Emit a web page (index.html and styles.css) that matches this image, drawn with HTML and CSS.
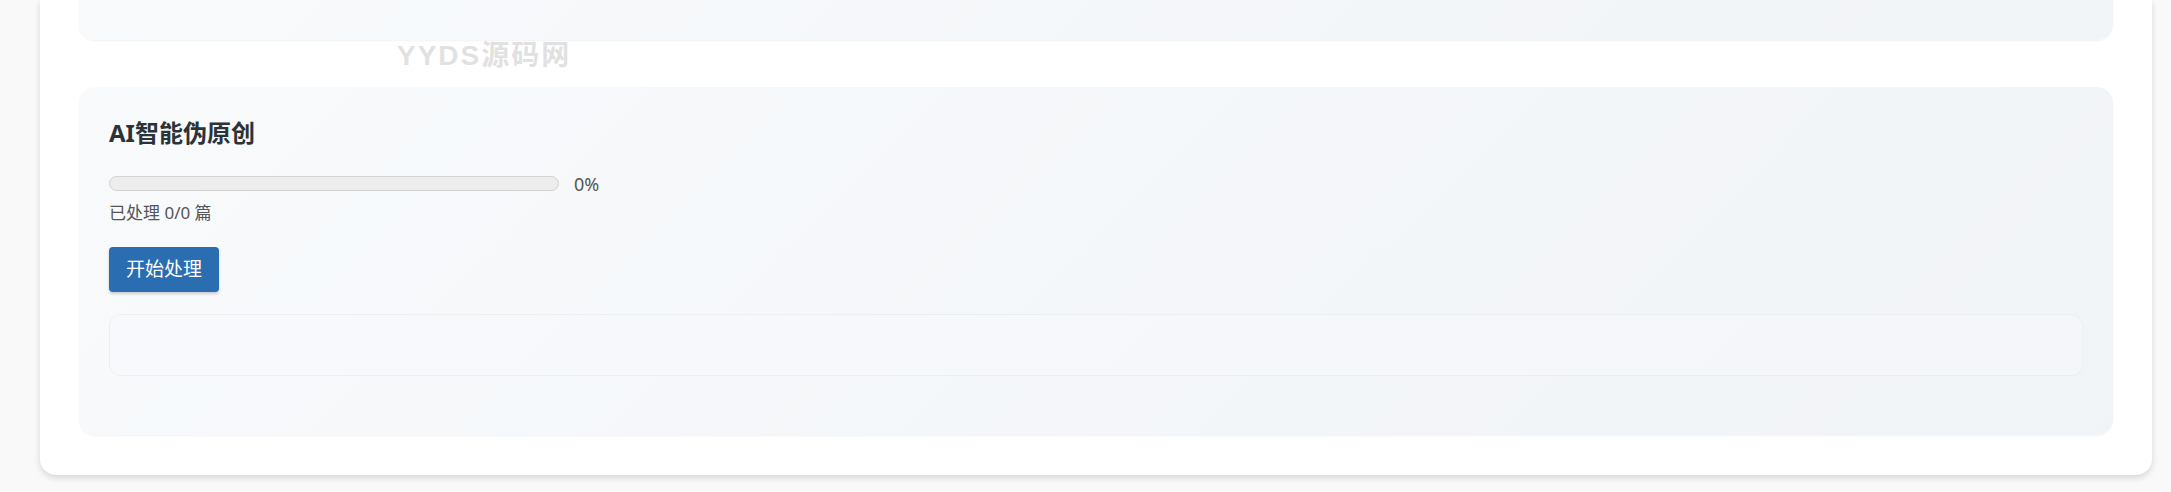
FILE: index.html
```html
<!DOCTYPE html>
<html lang="zh-CN">
<head>
    <meta charset="UTF-8">
    <meta name="viewport" content="width=device-width, initial-scale=1.0">
    <title>AI智能伪原创</title>
    <link rel="stylesheet" href="styles.css">
</head>
<body>
    <div class="page">
        <div class="panel">
            <!-- Poprzednia sekcja (ucięta u góry) -->
            <section class="section section-top"></section>

            <!-- Znak wodny -->
            <div class="watermark">YYDS源码网</div>

            <!-- AI伪原创 -->
            <section class="section">
                <h3 class="section-title">AI智能伪原创</h3>
                <div class="progress-row">
                    <div class="progress-bar"><div class="progress-fill" style="width: 0%"></div></div>
                    <span class="progress-text">0%</span>
                </div>
                <div class="progress-info">已处理 0/0 篇</div>
                <button class="btn-start">开始处理</button>
                <div class="result-box"></div>
            </section>
        </div>
    </div>
</body>
</html>
```

FILE: styles.css
```css
/* Styl ogólny */
body {
    margin: 0;
    font-family: "Noto Sans", "Noto Sans CJK SC", sans-serif;
    background-color: #f9f9fa;
    color: #333333;
}

.page {
    padding: 0 19px 17px 40px;
}

/* Biały panel */
.panel {
    position: relative;
    background-color: #ffffff;
    border-radius: 0 0 16px 16px;
    box-shadow: 0 3px 6px rgba(0, 0, 0, 0.14);
    padding: 0 39px 40px;
}

/* Sekcje */
.section {
    background: linear-gradient(135deg, #f8fafc 0%, #f1f4f7 100%);
    border-radius: 16px;
    box-shadow: 0 1px 2px rgba(0, 0, 0, 0.05);
    padding: 30px 30px 30px;
}

.section-top {
    height: 40px;
    padding: 0;
    border-radius: 0 0 16px 16px;
    margin-bottom: 47px;
}

.section-title {
    margin: 0;
    font-size: 24px;
    line-height: 32px;
    font-weight: 700;
    color: #2c3338;
}

/* Pasek postępu */
.progress-row {
    display: flex;
    align-items: center;
    gap: 15px;
    margin-top: 21px;
    height: 27px;
}

.progress-bar {
    width: 448px;
    height: 13px;
    background-color: #ededed;
    border: 1px solid #d2d2d2;
    border-radius: 8px;
    overflow: hidden;
}

.progress-fill {
    height: 100%;
    background-color: #2b6db0;
}

.progress-text {
    font-size: 18px;
    color: #555555;
}

.progress-info {
    margin-top: 4px;
    font-size: 17px;
    line-height: 24px;
    color: #555555;
}

/* Przycisk */
.btn-start {
    display: block;
    margin-top: 22px;
    font-family: inherit;
    font-size: 19px;
    line-height: 27px;
    padding: 9px 17px;
    color: #ffffff;
    background-color: #2a6db0;
    border: none;
    border-radius: 4px;
    box-shadow: 0 2px 3px rgba(0, 0, 0, 0.18);
    cursor: pointer;
}

/* Pole wyników */
.result-box {
    margin-top: 22px;
    margin-bottom: 29px;
    height: 60px;
    border: 1px solid rgba(0, 0, 0, 0.035);
    border-radius: 12px;
    background: linear-gradient(135deg, #f7f9fc 0%, #f4f6f9 100%);
}

/* Znak wodny */
.watermark {
    position: absolute;
    top: 33px;
    left: 357px;
    font-family: "Liberation Sans", "Noto Sans CJK SC", sans-serif;
    font-size: 28px;
    font-weight: 700;
    letter-spacing: 2px;
    color: rgba(200, 200, 200, 0.55);
    pointer-events: none;
}
```
